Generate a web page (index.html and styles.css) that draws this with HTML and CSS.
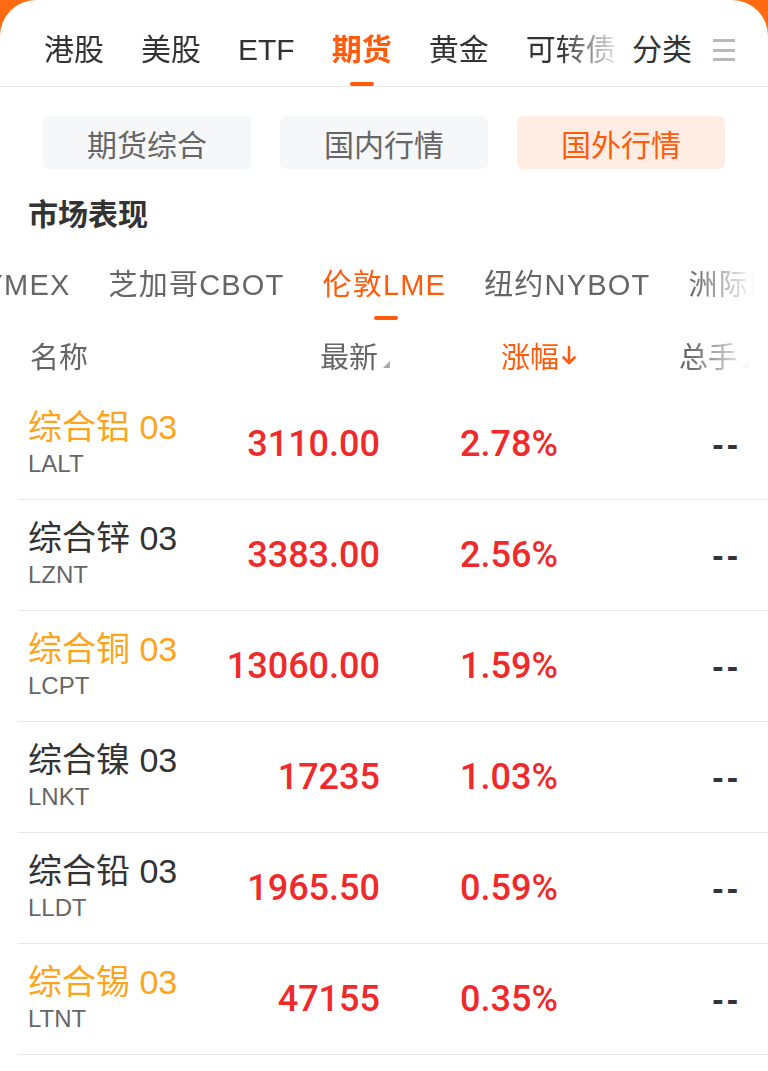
FILE: index.html
```html
<!DOCTYPE html>
<html lang="zh-CN">
<head>
  <meta charset="UTF-8" />
  <meta name="viewport" content="width=device-width, initial-scale=1.0"/>
  <title>期货 - 国外行情</title>
  <link rel="stylesheet" href="styles.css">
</head>
<body>
  <div class="card">
    <div class="top-bar">
      <div class="top-tabs">
        <span class="top-tab">港股</span>
        <span class="top-tab">美股</span>
        <span class="top-tab">ETF</span>
        <span class="top-tab active">期货</span>
        <span class="top-tab">黄金</span>
        <span class="top-tab">可转债</span>
      </div>
      <div class="top-fixed">
        <span class="top-tab">分类</span>
        <span class="menu-icon"><i></i><i></i><i></i></span>
      </div>
    </div>

    <div class="segments">
      <button class="segment">期货综合</button>
      <button class="segment">国内行情</button>
      <button class="segment active">国外行情</button>
    </div>

    <h2 class="section-title">市场表现</h2>

    <div class="sub-tabs">
      <div class="sub-tabs-inner">
        <span class="sub-tab">纽约NYMEX</span>
        <span class="sub-tab">芝加哥CBOT</span>
        <span class="sub-tab active">伦敦LME</span>
        <span class="sub-tab">纽约NYBOT</span>
        <span class="sub-tab">洲际ICE</span>
      </div>
    </div>

    <div class="list">
      <div class="list-head">
        <span class="col-name">名称</span>
        <span class="col-price sortable">最新</span>
        <span class="col-pct sorted">涨幅<svg class="sort-arrow" width="14" height="20" viewBox="0 0 14 20"><path d="M7 1v16M1.5 11.5 7 17l5.5-5.5" fill="none" stroke="currentColor" stroke-width="2.6" stroke-linecap="round" stroke-linejoin="round"/></svg></span>
        <span class="col-vol sortable">总手</span>
      </div>

      <div class="row">
        <div class="col-name">
          <div class="name hot">综合铝 03</div>
          <div class="code">LALT</div>
        </div>
        <div class="col-price num">3110.00</div>
        <div class="col-pct num">2.78%</div>
        <div class="col-vol dash">--</div>
      </div>

      <div class="row">
        <div class="col-name">
          <div class="name">综合锌 03</div>
          <div class="code">LZNT</div>
        </div>
        <div class="col-price num">3383.00</div>
        <div class="col-pct num">2.56%</div>
        <div class="col-vol dash">--</div>
      </div>

      <div class="row">
        <div class="col-name">
          <div class="name hot">综合铜 03</div>
          <div class="code">LCPT</div>
        </div>
        <div class="col-price num">13060.00</div>
        <div class="col-pct num">1.59%</div>
        <div class="col-vol dash">--</div>
      </div>

      <div class="row">
        <div class="col-name">
          <div class="name">综合镍 03</div>
          <div class="code">LNKT</div>
        </div>
        <div class="col-price num">17235</div>
        <div class="col-pct num">1.03%</div>
        <div class="col-vol dash">--</div>
      </div>

      <div class="row">
        <div class="col-name">
          <div class="name">综合铅 03</div>
          <div class="code">LLDT</div>
        </div>
        <div class="col-price num">1965.50</div>
        <div class="col-pct num">0.59%</div>
        <div class="col-vol dash">--</div>
      </div>

      <div class="row">
        <div class="col-name">
          <div class="name hot">综合锡 03</div>
          <div class="code">LTNT</div>
        </div>
        <div class="col-price num">47155</div>
        <div class="col-pct num">0.35%</div>
        <div class="col-vol dash">--</div>
      </div>
    </div>
  </div>
</body>
</html>
```

FILE: styles.css
```css
:root {
  --orange: #ff5b0a;
  --orange-bg: #ffede4;
  --text: #333333;
  --text-2: #666666;
  --line: #e8e8e8;
  --red: #f02a2a;
  --gold: #fca51c;
}

body {
  margin: 0;
  font-family: "Liberation Sans", "Noto Sans CJK SC", sans-serif;
  background: linear-gradient(90deg, #ff6a12, #ff8a3a 50%, #ff6a12);
  color: var(--text);
}

.card {
  background: #ffffff;
  border-radius: 36px 36px 0 0;
  min-height: 100vh;
}

/* top tabs */
.top-bar {
  display: flex;
  height: 86px;
  border-bottom: 1px solid var(--line);
}

.top-tabs {
  display: flex;
  gap: 37px;
  padding-left: 44px;
  width: 620px;
  overflow: hidden;
  flex-shrink: 0;
  -webkit-mask-image: linear-gradient(90deg, #000 560px, transparent 625px);
  mask-image: linear-gradient(90deg, #000 560px, transparent 625px);
  box-sizing: border-box;
}

.top-tab {
  position: relative;
  flex-shrink: 0;
  font-size: 30px;
  line-height: 40px;
  padding-top: 30px;
  color: var(--text);
  white-space: nowrap;
}

.top-tab.active {
  color: var(--orange);
  font-weight: 700;
}

.top-tab.active::after {
  content: "";
  position: absolute;
  left: 50%;
  bottom: 0;
  width: 24px;
  height: 4px;
  margin-left: -12px;
  border-radius: 2px;
  background: var(--orange);
}

.top-fixed {
  display: flex;
  gap: 21px;
  padding-left: 12px;
}

.menu-icon {
  display: flex;
  flex-direction: column;
  justify-content: space-between;
  width: 22px;
  height: 22px;
  margin-top: 39px;
}

.menu-icon i {
  display: block;
  height: 3px;
  background: #b8b8b8;
}

/* segments */
.segments {
  display: grid;
  grid-template-columns: repeat(3, 1fr);
  gap: 29px;
  margin: 29px 43px 0;
}

.segment {
  height: 53px;
  border: none;
  border-radius: 6px;
  background: #f6f7f9;
  color: var(--text-2);
  font-family: inherit;
  font-size: 30px;
  padding: 0;
}

.segment.active {
  background: var(--orange-bg);
  color: var(--orange);
}

.section-title {
  margin: 26px 0 0 28px;
  font-size: 30px;
  line-height: 40px;
  font-weight: 700;
  color: var(--text);
}

/* sub tabs */
.sub-tabs {
  overflow: hidden;
  margin-top: 30px;
  -webkit-mask-image: linear-gradient(90deg, #000 690px, transparent 755px);
  mask-image: linear-gradient(90deg, #000 690px, transparent 755px);
}

.sub-tabs-inner {
  display: flex;
  margin-left: -118px;
}

.sub-tab {
  position: relative;
  flex-shrink: 0;
  padding: 0 19px;
  height: 55px;
  font-size: 29px;
  line-height: 40px;
  letter-spacing: 1.2px;
  color: var(--text-2);
  white-space: nowrap;
}

.sub-tab.active {
  color: var(--orange);
}

.sub-tab.active::after {
  content: "";
  position: absolute;
  left: 50%;
  bottom: 0;
  width: 24px;
  height: 4px;
  margin-left: -10px;
  border-radius: 2px;
  background: var(--orange);
}

/* list */
.list {
  margin-left: 18px;
}

.list-head,
.row {
  display: grid;
  grid-template-columns: 192px 160px 178px 180px;
  padding: 0 30px 0 10px;
  align-items: center;
}

.list-head {
  height: 69px;
  font-size: 29px;
  color: var(--text-2);
  -webkit-mask-image: linear-gradient(90deg, #000 670px, transparent 735px);
  mask-image: linear-gradient(90deg, #000 670px, transparent 735px);
}

.list-head .col-name {
  padding-left: 2px;
}

.list-head .col-price {
  text-align: right;
  margin-right: -10px;
}

.list-head .col-vol {
  text-align: right;
  margin-right: -11px;
}

.list-head .col-pct {
  display: flex;
  align-items: center;
  justify-content: flex-end;
  margin-right: -20px;
}

.sortable::after {
  content: "";
  display: inline-block;
  width: 0;
  height: 0;
  margin-left: 5px;
  border-left: 7px solid transparent;
  border-bottom: 7px solid #a8a8a8;
}

.sorted {
  color: var(--orange);
}

.sort-arrow {
  margin: 2px 2px 0 3px;
}

.row {
  height: 110px;
  border-bottom: 1px solid var(--line);
}

.name {
  font-size: 34px;
  line-height: 40px;
  color: var(--text);
  white-space: nowrap;
}

.name.hot {
  color: var(--gold);
}

.code {
  font-size: 24px;
  line-height: 34px;
  color: var(--text-2);
}

.num {
  font-family: Roboto, "Liberation Sans", sans-serif;
  font-size: 36px;
  font-weight: 500;
  color: var(--red);
  text-align: right;
}

.dash {
  text-align: right;
  font-size: 34px;
  font-weight: 700;
  letter-spacing: 3px;
  margin-right: -3px;
  color: var(--text);
}
```
